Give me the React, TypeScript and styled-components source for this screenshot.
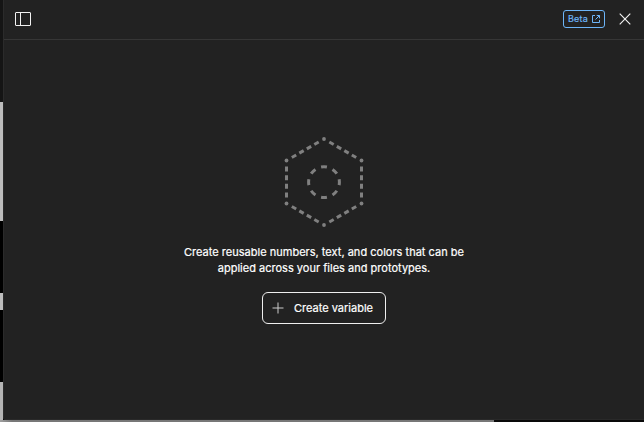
import React from "react";
import styled, { createGlobalStyle } from "styled-components";

const GlobalStyle = createGlobalStyle`
  * { box-sizing: border-box; }
  html, body { margin: 0; background: #000; }
  body { font-family: Inter, "Liberation Sans", sans-serif; overflow: hidden; }
`;

const Screen = styled.div`
  display: grid;
  grid-template-columns: 3px 1fr;
  grid-template-rows: 420px 2px;
  width: 644px;
  height: 422px;
`;

const CanvasEdge = styled.div`
  background: linear-gradient(
    #151515 0 102px,
    #bdbdbd 102px 221px,
    #000 221px 293px,
    #bdbdbd 293px 310px,
    #000 310px 382px,
    #b4b4b4 382px
  );
`;

const CanvasBottom = styled.div`
  grid-column: 1 / -1;
  background: linear-gradient(90deg, #a0a0a0 0, #777 12px 494px, #090909 494px);
`;

const Modal = styled.main`
  display: flex;
  flex-direction: column;
  min-width: 0;
  background: #222;
  border-left: 1px solid #2b2b2b;
  border-bottom: 1px solid #292929;
  border-bottom-left-radius: 2px;
  color: #fff;
`;

const Header = styled.header`
  display: flex;
  align-items: center;
  flex: 0 0 40px;
  padding: 0 13px 2px 11px;
  border-bottom: 1px solid #363636;
`;

const IconButton = styled.button`
  display: flex;
  padding: 0;
  border: 0;
  background: none;
  color: #f2f2f2;
`;

const BetaLink = styled.a`
  display: flex;
  align-items: center;
  justify-content: space-between;
  width: 42px;
  height: 18px;
  margin: 0 14px 0 auto;
  padding: 0 4px;
  border: 1px solid #6db5f8;
  border-radius: 3px;
  color: #6db5f8;
  font-size: 9px;
  font-weight: 400;
  line-height: 16px;
  letter-spacing: 0.2px;
  -webkit-text-stroke: 0.2px currentColor;
`;

const EmptyState = styled.section`
  display: flex;
  flex-direction: column;
  align-items: center;
  padding: 96px 0 0;
`;

const Message = styled.p`
  width: 300px;
  margin: 16px 0 16px;
  font-size: 11px;
  font-weight: 400;
  line-height: 16px;
  letter-spacing: 0.015px;
  text-align: center;
  white-space: nowrap;
  -webkit-text-stroke: 0.2px currentColor;
`;

const CreateButton = styled.button`
  display: flex;
  align-items: center;
  gap: 10px;
  width: 124px;
  height: 32px;
  padding: 0 0 0 9px;
  border: 1px solid #efefef;
  border-radius: 6px;
  background: transparent;
  color: #fff;
  font: 400 11px/16px Inter, "Liberation Sans", sans-serif;
  letter-spacing: 0;
  white-space: nowrap;
  -webkit-text-stroke: 0.2px currentColor;
`;

const SidebarIcon = () => (
  <svg width="16" height="14" fill="none" stroke="currentColor">
    <rect x=".5" y=".5" width="15" height="13" rx=".5" />
    <path d="M5.5 1v12" />
  </svg>
);

const ExternalIcon = () => (
  <svg width="8" height="8" fill="none" stroke="currentColor">
    <path d="M3 .5H.5v7h7V5M4.7 .5h2.8v2.8M7.5 .5l-4 4" />
  </svg>
);

const CloseIcon = () => (
  <svg width="12" height="12" fill="none" stroke="currentColor" strokeWidth="1.15">
    <path d="M.7 .7l10.6 10.6M11.3 .7L.7 11.3" />
  </svg>
);

const PlusIcon = () => (
  <svg width="12" height="12" fill="none" stroke="#ccc">
    <path d="M6 .5v11M.5 6h11" />
  </svg>
);

const corners = [
  [40, 3],
  [77.5, 24.5],
  [77.5, 67.5],
  [40, 89],
  [2.5, 67.5],
  [2.5, 24.5],
];

const VariableArt = () => (
  <svg width="80" height="92" fill="none" stroke="#808080" strokeWidth="3">
    {corners.map(([x, y], i) => {
      const [nextX, nextY] = corners[(i + 1) % corners.length];
      return (
        <path
          key={i}
          d={`M${x} ${y}L${nextX} ${nextY}`}
          pathLength="43"
          strokeDasharray="0 6.1 5 3.6 5 3.6 5 3.6 5 20"
        />
      );
    })}
    {corners.map(([x, y], i) => (
      <circle key={i} cx={x} cy={y} r="1.9" fill="#808080" stroke="none" />
    ))}
    <circle
      cx="40"
      cy="46.2"
      r="15.4"
      pathLength="96"
      strokeDasharray="6 6"
      strokeDashoffset="3"
    />
  </svg>
);

export default function App() {
  return (
    <>
      <GlobalStyle />
      <Screen>
        <CanvasEdge />
        <Modal>
          <Header>
            <IconButton aria-label="Toggle sidebar"><SidebarIcon /></IconButton>
            <BetaLink>Beta<ExternalIcon /></BetaLink>
            <IconButton aria-label="Close"><CloseIcon /></IconButton>
          </Header>
          <EmptyState>
            <VariableArt />
            <Message>
              Create reusable numbers, text, and colors that can be<br />
              applied across your files and prototypes.
            </Message>
            <CreateButton><PlusIcon />Create variable</CreateButton>
          </EmptyState>
        </Modal>
        <CanvasBottom />
      </Screen>
    </>
  );
}
